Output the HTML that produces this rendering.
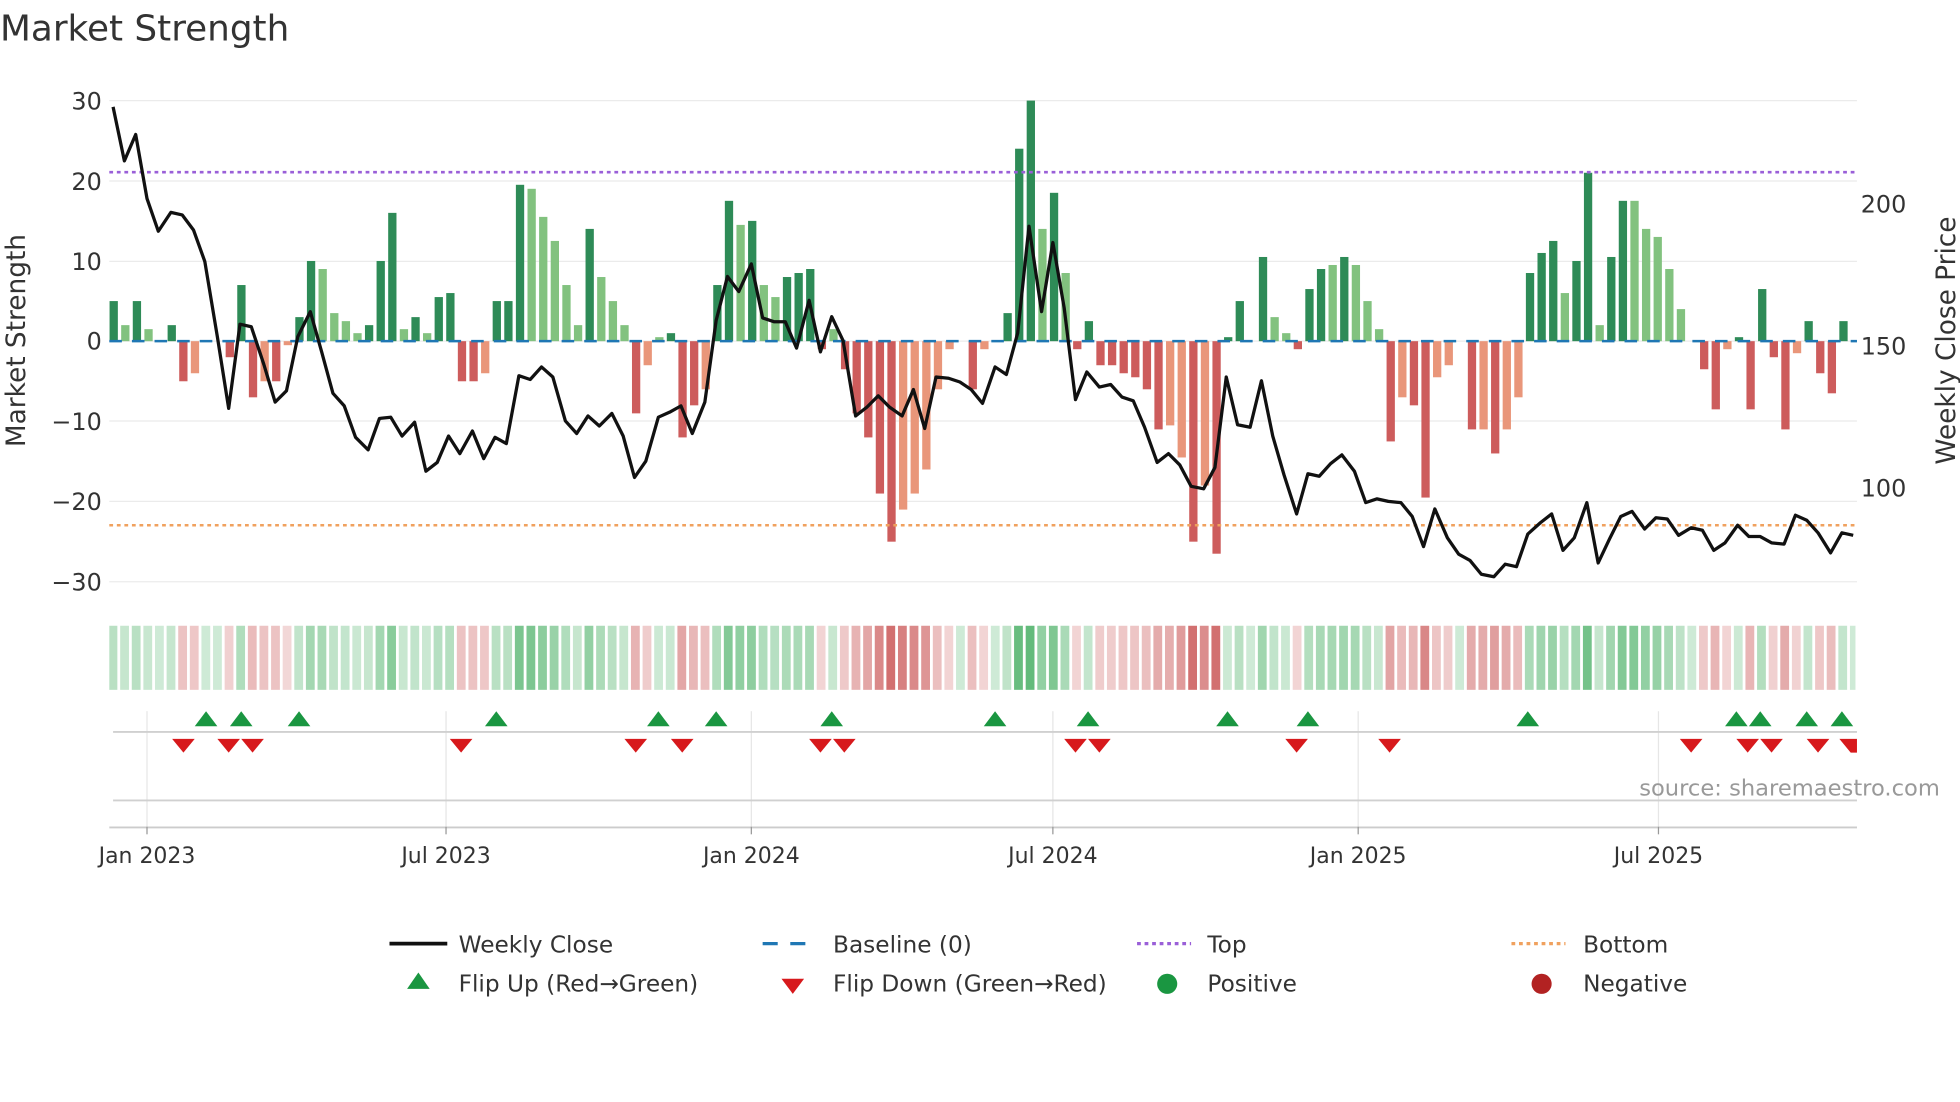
<!DOCTYPE html>
<html><head><meta charset="utf-8"><style>
html,body{margin:0;padding:0;background:#fff;}
svg{display:block;font-family:"DejaVu Sans","Liberation Sans",sans-serif;}
</style></head><body>
<svg id="s" width="1960" height="1102" viewBox="0 0 1560 877" xmlns="http://www.w3.org/2000/svg">
<rect width="1560" height="877" fill="#fff"/>
<text x="0" y="32" font-size="28.5" fill="#333">Market Strength</text>
<g id="grid" stroke="#ebebeb" stroke-width="1"></g>
<g id="heat"></g>
<g id="bars"></g>
<line x1="87" x2="1478" y1="137" y2="137" stroke="#9a5fd8" stroke-width="2" stroke-dasharray="3,3"/>
<line x1="87" x2="1478" y1="418" y2="418" stroke="#f0a15e" stroke-width="2" stroke-dasharray="3,3"/>
<line x1="87" x2="1478" y1="271.5" y2="271.5" stroke="#1f77b4" stroke-width="2" stroke-dasharray="10,8"/>
<polyline id="price" fill="none" stroke="#111" stroke-width="2.6" stroke-linejoin="round"/>
<g font-size="19" fill="#333" text-anchor="end">
<text x="81" y="87">30</text><text x="81" y="151">20</text><text x="81" y="215">10</text>
<text x="81" y="278">0</text><text x="81" y="342">−10</text><text x="81" y="406">−20</text><text x="81" y="470">−30</text>
</g>
<g font-size="19" fill="#333">
<text x="1481" y="169">200</text><text x="1481" y="282">150</text><text x="1481" y="395">100</text>
</g>
<text transform="translate(20,271) rotate(-90)" font-size="21" fill="#333" text-anchor="middle">Market Strength</text>
<text transform="translate(1556,271) rotate(-90)" font-size="21" fill="#333" text-anchor="middle">Weekly Close Price</text>
<g stroke="#e6e6e6" stroke-width="1">
<line x1="117" x2="117" y1="566" y2="658"/><line x1="355" x2="355" y1="566" y2="658"/>
<line x1="598" x2="598" y1="566" y2="658"/><line x1="838" x2="838" y1="566" y2="658"/>
<line x1="1081" x2="1081" y1="566" y2="658"/><line x1="1320" x2="1320" y1="566" y2="658"/>
</g>
<line x1="90" x2="1478" y1="582.5" y2="582.5" stroke="#d0d0d0" stroke-width="1.5"/>
<line x1="90" x2="1478" y1="637" y2="637" stroke="#d0d0d0" stroke-width="1.5"/>
<line x1="87" x2="1478" y1="658.5" y2="658.5" stroke="#ccc" stroke-width="1.5"/>
<g stroke="#999" stroke-width="1"><line x1="117" x2="117" y1="658" y2="664"/><line x1="355" x2="355" y1="658" y2="664"/><line x1="598" x2="598" y1="658" y2="664"/><line x1="838" x2="838" y1="658" y2="664"/><line x1="1081" x2="1081" y1="658" y2="664"/><line x1="1320" x2="1320" y1="658" y2="664"/></g>
<g id="flips"></g>
<text x="1544" y="633" font-size="18" fill="#999" text-anchor="end">source: sharemaestro.com</text>
<g font-size="17.5" fill="#333" text-anchor="middle">
<text x="117" y="687">Jan 2023</text><text x="355" y="687">Jul 2023</text><text x="598" y="687">Jan 2024</text>
<text x="838" y="687">Jul 2024</text><text x="1081" y="687">Jan 2025</text><text x="1320" y="687">Jul 2025</text>
</g>
<g font-size="18.5" fill="#333">
<line x1="310" x2="356" y1="751" y2="751" stroke="#111" stroke-width="3"/>
<text x="365" y="758">Weekly Close</text>
<line x1="607" x2="650" y1="751" y2="751" stroke="#1f77b4" stroke-width="2.5" stroke-dasharray="12,10"/>
<text x="663" y="758">Baseline (0)</text>
<line x1="905" x2="948" y1="751" y2="751" stroke="#9a5fd8" stroke-width="2.5" stroke-dasharray="3,3"/>
<text x="961" y="758">Top</text>
<line x1="1203" x2="1246" y1="751" y2="751" stroke="#f0a15e" stroke-width="2.5" stroke-dasharray="3,3"/>
<text x="1260" y="758">Bottom</text>
<polygon points="333,774 324,787 342,787" fill="#1a9641"/>
<text x="365" y="789">Flip Up (Red→Green)</text>
<polygon points="622,779 640,779 631,791" fill="#d7191c"/>
<text x="663" y="789">Flip Down (Green→Red)</text>
<circle cx="929" cy="783" r="8" fill="#1a9641"/>
<text x="961" y="789">Positive</text>
<circle cx="1227" cy="783" r="8" fill="#b22222"/>
<text x="1260" y="789">Negative</text>
</g>
</svg>
<script>
var NS="http://www.w3.org/2000/svg";
function el(t,a,p){var e=document.createElementNS(NS,t);for(var k in a)e.setAttribute(k,a[k]);p.appendChild(e);return e;}
var g=document.getElementById('grid');
[80,144,208,271.5,335,399,463].forEach(function(y){el('line',{x1:87,x2:1478,y1:y,y2:y},g);});
var B="5d 2l 5d 1.5l 0z 2d -5r -4o 0z 0z -2r 7d -7r -5o -5r -0.5o 3d 10d 9l 3.5l 2.5l 1l 2d 10d 16d 1.5l 3d 1l 5.5d 6d -5r -5r -4o 5d 5d 19.5d 19l 15.5l 12.5l 7l 2l 14d 8l 5l 2l -9r -3o 0.5l 1d -12r -8r -6o 7d 17.5d 14.5l 15d 7l 5.5l 8d 8.5d 9d -1r 1.5l -3.5r -9r -12r -19r -25r -21o -19o -16o -6o -1o 0z -6r -1o 0z 3.5d 24d 30d 14l 18.5d 8.5l -1r 2.5d -3r -3r -4r -4.5r -6r -11r -10.5o -14.5o -25r -18o -26.5r 0.5d 5d 0z 10.5d 3l 1l -1r 6.5d 9d 9.5l 10.5d 9.5l 5l 1.5l -12.5r -7o -8r -19.5r -4.5o -3o 0z -11r -11o -14r -11o -7o 8.5d 11d 12.5d 6l 10d 21d 2l 10.5d 17.5d 17.5l 14l 13l 9l 4l 0z -3.5r -8.5r -1o 0.5d -8.5r 6.5d -2r -11r -1.5o 2.5d -4r -6.5r 2.5d 0z".split(" ");
var col={d:"#2e8b57",l:"#82c27f",r:"#cd5c5c",o:"#e9967a",z:"#fff"};
var bg=document.getElementById('bars'),hg=document.getElementById('heat');
B.forEach(function(s,i){var v=parseFloat(s),c=s.slice(-1),x=90.5+9.24*i;
 if(v!==0){var y0=271.5,y1=271.5-v*6.383;el('rect',{x:x-3.3,y:Math.min(y0,y1),width:6.6,height:Math.abs(y1-y0),fill:col[c]},bg);}
 var a,f;if(v>=0){a=0.25+0.55*Math.min(v/25,1);f="rgba(60,170,90,"+a+")";}else{a=0.22+0.6*Math.min(-v/25,1);f="rgba(200,80,80,"+a+")";}
 var x0=Math.max(87,x-4.1),x1=Math.min(1478,x+4.1);
 el('rect',{x:x0,y:498,width:x1-x0-1.2,height:51,fill:f},hg);
});
var P="90,85 99,128 108,107 117,158 126,184 136,169 145,171 154,183 163,208 173,268 182,325 191,258 200,260 210,290 219,320 228,311 237,268 247,248 256,280 265,313 274,323 283,348 293,358 302,333 311,332 320,347 330,336 339,375 348,368 357,347 366,361 376,343 385,365 394,348 403,353 413,299 422,302 431,292 440,300 450,335 459,345 468,331 477,339 487,329 496,347 505,380 514,367 524,332 533,328 542,323 551,345 561,320 570,255 579,220 588,232 598,210 607,253 616,256 625,256 634,277 644,239 653,280 662,252 671,271 681,331 690,324 699,315 708,324 718,331 727,310 736,341 745,300 755,301 764,304 773,310 782,321 792,292 801,298 810,265 819,180 829,248 838,193 847,245 856,318 865,296 875,308 884,306 893,316 902,319 911,340 921,368 930,361 939,370 948,387 958,389 967,372 976,300 985,338 995,340 1004,303 1013,347 1022,378 1032,409 1041,377 1050,379 1059,369 1068,362 1078,375 1087,400 1096,397 1105,399 1115,400 1124,411 1133,435 1142,405 1152,428 1161,441 1170,446 1179,457 1189,459 1198,449 1207,451 1216,425 1226,416 1235,409 1244,438 1253,428 1263,400 1272,448 1281,429 1290,411 1299,407 1309,421 1318,412 1327,413 1336,426 1346,420 1355,422 1364,438 1373,432 1383,418 1392,427 1401,427 1410,432 1420,433 1429,410 1438,414 1447,424 1457,440 1466,424 1475,426";
document.getElementById('price').setAttribute('points',P);
var fg=document.getElementById('flips');
[164,192,238,395,524,570,662,792,866,977,1041,1216,1382,1401,1438,1466].forEach(function(x){el('polygon',{points:x+",566 "+(x-9)+",578 "+(x+9)+",578",fill:"#1a9641"},fg);});
[146,182,201,367,506,543,653,672,856,875,1032,1106,1346,1391,1410,1447,1473].forEach(function(x){var r=Math.min(x+9,1478);el('polygon',{points:(x-9)+",588 "+r+",588 "+(r===x+9?x:r)+",599 "+x+",599",fill:"#d7191c"},fg);});
</script>
</body></html>
